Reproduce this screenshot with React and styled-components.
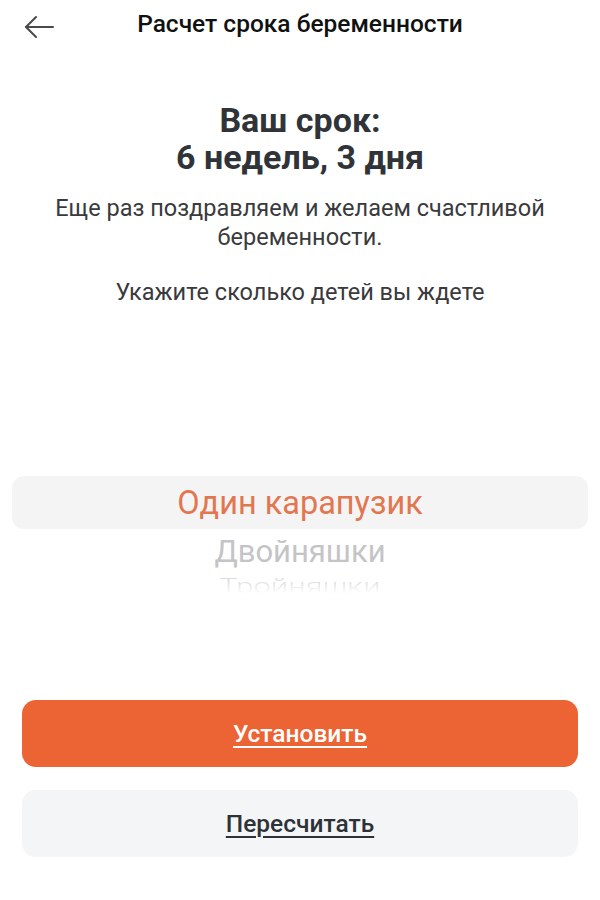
import React from 'react'
import styled, {createGlobalStyle} from 'styled-components'

const colors = {
  text: '#2d3238',
  body: '#3a3a3c',
  orange: '#ec6334',
  pickOrange: '#e2774f',
  light: '#f4f4f5'
}

const GlobalStyle = createGlobalStyle`
  html, body {
    margin: 0;
    padding: 0;
    background: #fff;
  }
  body {
    font-family: Roboto, "Liberation Sans", sans-serif;
  }
`

const Screen = styled.div`
  width: 600px;
  height: 900px;
  display: flex;
  flex-direction: column;
  background: #fff;
`

const Header = styled.header`
  position: relative;
  height: 50px;
  display: flex;
  align-items: center;
  justify-content: center;
`

const BackButton = styled.button`
  position: absolute;
  left: 22px;
  top: 12px;
  padding: 0;
  border: 0;
  background: none;
  display: flex;
`

const Title = styled.h1`
  margin: 0;
  margin-top: -3px;
  font-size: 24.5px;
  font-weight: 500;
  color: #111;
`

const Summary = styled.section`
  display: flex;
  flex-direction: column;
  align-items: center;
  text-align: center;
  padding: 52px 30px 0;
`

const Term = styled.h2`
  margin: 0;
  font-size: 34px;
  line-height: 37px;
  font-weight: 700;
  color: #303438;
`

const Text = styled.p`
  margin: ${props => props.gap || '0'};
  font-size: 23.5px;
  line-height: 29px;
  font-weight: 400;
  color: ${colors.body};
`

const Picker = styled.div`
  margin: 169px 12px 0;
  display: flex;
  flex-direction: column;
  align-items: center;
  height: 121px;
  overflow: hidden;
`

const Option = styled.div`
  width: 100%;
  display: flex;
  justify-content: center;
  align-items: center;
  flex-shrink: 0;
  height: ${props => props.h}px;
  font-size: ${props => props.size}px;
  color: ${props => props.color};
  background: ${props => props.selected ? colors.light : 'transparent'};
  border-radius: 12px;
  transform: scaleY(${props => props.squash || 1});
  transform-origin: top center;
  ${props => props.fade && `
    font-weight: 300;
    -webkit-mask-image: linear-gradient(to bottom, #000 30%, transparent 85%);
    mask-image: linear-gradient(to bottom, #000 30%, transparent 85%);
  `}
`

const Actions = styled.div`
  display: flex;
  flex-direction: column;
  gap: 23px;
  padding: 103px 22px 0;
`

const Button = styled.button`
  height: 67px;
  border: 0;
  border-radius: 14px;
  font-family: Roboto, "Liberation Sans", sans-serif;
  font-size: 24.5px;
  font-weight: 500;
  text-decoration: underline;
  text-underline-offset: 4px;
  text-decoration-thickness: 2px;
  background: ${props => props.primary ? colors.orange : '#f4f5f6'};
  color: ${props => props.primary ? '#fff' : colors.text};
`

const BackArrow = () => (
  <svg width='34' height='30' viewBox='0 0 34 30' fill='none' stroke='#4a4a4a' strokeWidth='2' strokeLinecap='round' strokeLinejoin='round'>
    <path d='M4 15 H31' />
    <path d='M14 5 L4 15 L14 25' />
  </svg>
)

function App () {
  return (
    <Screen>
      <GlobalStyle />
      <Header>
        <BackButton aria-label='back'>
          <BackArrow />
        </BackButton>
        <Title>Расчет срока беременности</Title>
      </Header>
      <Summary>
        <Term>Ваш срок:<br />6 недель, 3 дня</Term>
        <Text gap='18px 0 0'>Еще раз поздравляем и желаем счастливой беременности.</Text>
        <Text gap='26px 0 0'>Укажите сколько детей вы ждете</Text>
      </Summary>
      <Picker>
        <Option selected h={53} size={32.5} color={colors.pickOrange}>Один карапузик</Option>
        <Option h={44} size={31} color='#c4c4c6'>Двойняшки</Option>
        <Option h={36} size={31} color='#dcdcde' squash={0.68} fade>Тройняшки</Option>
      </Picker>
      <Actions>
        <Button primary>Установить</Button>
        <Button>Пересчитать</Button>
      </Actions>
    </Screen>
  )
}

export default App
